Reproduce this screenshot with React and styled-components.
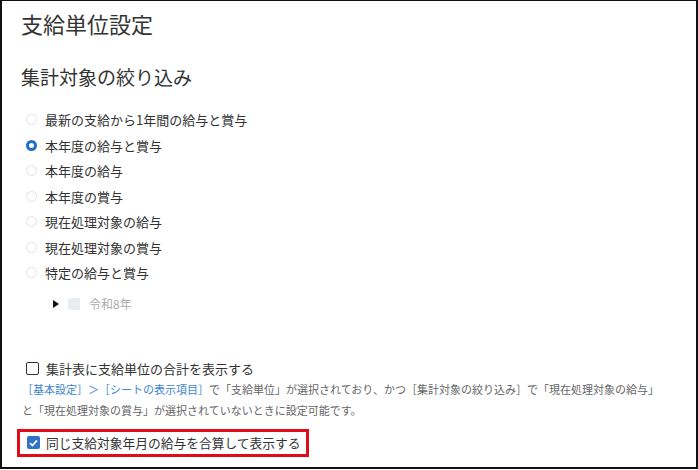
import React from 'react'
import styled, { createGlobalStyle } from 'styled-components'

const GlobalStyle = createGlobalStyle`
  html, body {
    margin: 0;
    padding: 0;
    background: #fff;
  }
  body {
    font-family: "Noto Sans CJK JP", "Noto Sans", sans-serif;
    color: #333;
  }
`

const options = [
  '最新の支給から1年間の給与と賞与',
  '本年度の給与と賞与',
  '本年度の給与',
  '本年度の賞与',
  '現在処理対象の給与',
  '現在処理対象の賞与',
  '特定の給与と賞与',
]

const App = () => {
  return (
    <>
      <GlobalStyle />
      <Panel>
        <Title>支給単位設定</Title>
        <Section>集計対象の絞り込み</Section>
        <RadioList>
          {options.map((label, i) => (
            <RadioRow key={label}>
              <Radio checked={i === 1} />
              <span>{label}</span>
            </RadioRow>
          ))}
        </RadioList>
        <TreeRow>
          <Caret />
          <GhostBox />
          <TreeLabel>令和8年</TreeLabel>
        </TreeRow>
        <CheckRow>
          <Box />
          <span>集計表に支給単位の合計を表示する</span>
        </CheckRow>
        <Help>
          <Link>［基本設定］＞［シートの表示項目］</Link>で「支給単位」が選択されており、かつ［集計対象の絞り込み］で「現在処理対象の給与」
          <br />
          と「現在処理対象の賞与」が選択されていないときに設定可能です。
        </Help>
        <Highlight>
          <Box checked>
            <svg width="9" height="8" viewBox="0 0 9 8">
              <path d="M1 4.2 L3.4 6.5 L8 1.3" fill="none" stroke="#fff" strokeWidth="1.8" />
            </svg>
          </Box>
          <span>同じ支給対象年月の給与を合算して表示する</span>
        </Highlight>
      </Panel>
    </>
  )
}

const Panel = styled.div`
  box-sizing: border-box;
  width: 698px;
  height: 469px;
  border: 2px solid #111;
  border-top-width: 1px;
  padding: 6px 16px 0 15px;
  display: flex;
  flex-direction: column;
  align-items: flex-start;
`

const Title = styled.h1`
  margin: 0;
  padding-left: 4px;
  font-size: 22px;
  font-weight: 400;
  line-height: 32px;
  color: #333;
`

const Section = styled.h2`
  margin: 24px 0 0;
  padding-left: 4px;
  font-size: 19px;
  font-weight: 400;
  line-height: 28px;
  color: #333;
`

const RadioList = styled.div`
  margin-top: 16px;
  display: flex;
  flex-direction: column;
`

const RadioRow = styled.label`
  display: flex;
  align-items: center;
  gap: 8px;
  height: 25.5px;
  padding-left: 9px;
  font-size: 13px;
  color: #333;
`

const Radio = styled.span`
  box-sizing: border-box;
  width: 11px;
  height: 11px;
  border-radius: 50%;
  border: ${({ checked }) => (checked ? '3px solid #1f6fc4' : '1px solid #e3e3e3')};
  background: #fff;
`

const TreeRow = styled.div`
  margin-top: 6px;
  height: 24px;
  display: flex;
  align-items: center;
  padding-left: 36px;
  font-size: 12px;
  color: #aaa;
`

const Caret = styled.span`
  width: 0;
  height: 0;
  border-top: 4px solid transparent;
  border-bottom: 4px solid transparent;
  border-left: 6px solid #111;
  margin-right: 9px;
`

const GhostBox = styled.span`
  width: 12px;
  height: 12px;
  border-radius: 2px;
  background: #e9edf2;
`

const TreeLabel = styled.span`
  margin-left: 9px;
`

const Box = styled.span`
  box-sizing: border-box;
  flex-shrink: 0;
  width: 13px;
  height: 13px;
  border-radius: 2px;
  display: flex;
  align-items: center;
  justify-content: center;
  border: ${({ checked }) => (checked ? 'none' : '1.5px solid #333')};
  background: ${({ checked }) => (checked ? '#2f72c8' : '#fff')};
`

const CheckRow = styled.label`
  margin-top: 43px;
  height: 20px;
  display: flex;
  align-items: center;
  gap: 7px;
  padding-left: 9px;
  font-size: 13px;
  color: #333;
`

const Help = styled.p`
  margin: 0;
  padding-left: 5px;
  font-size: 11px;
  line-height: 21px;
  color: #666;
  white-space: nowrap;
`

const Link = styled.span`
  color: #3d85cf;
`

const Highlight = styled.label`
  box-sizing: border-box;
  margin-top: 8px;
  height: 28px;
  border: 3px solid #e00c1a;
  display: flex;
  align-items: center;
  gap: 6px;
  padding: 0 5px 0 7px;
  font-size: 12.75px;
  color: #333;
  white-space: nowrap;
`

export default App
